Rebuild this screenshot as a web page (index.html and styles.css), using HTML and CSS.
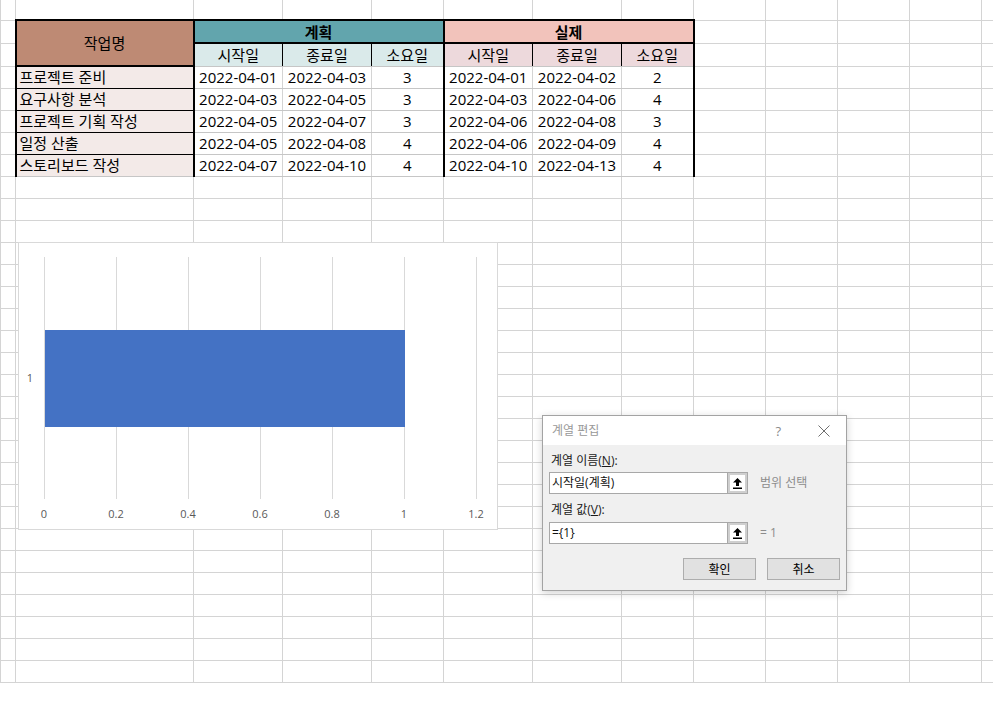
FILE: index.html
```html
<!DOCTYPE html>
<html lang="ko">
<head>
  <meta charset="UTF-8">
  <title>계열 편집</title>
  <link rel="stylesheet" href="styles.css">
</head>
<body>
  <table class="sheet">
    <colgroup>
      <col class="w-a"><col class="w-b"><col class="w-date"><col class="w-date"><col class="w-num">
      <col class="w-date"><col class="w-date"><col class="w-num">
      <col class="w-num"><col class="w-num"><col class="w-num"><col class="w-num"><col class="w-end">
    </colgroup>
    <tr class="r-top"><td></td><td></td><td></td><td></td><td></td><td></td><td></td><td></td><td></td><td></td><td></td><td></td><td></td></tr>
    <tr class="r-head">
      <td></td>
      <td class="name-head" rowspan="2">작업명</td>
      <td class="plan-head" colspan="3">계획</td>
      <td class="real-head" colspan="3">실제</td>
      <td></td><td></td><td></td><td></td><td></td>
    </tr>
    <tr class="r-head">
      <td></td>
      <td class="plan-sub split">시작일</td>
      <td class="plan-sub split">종료일</td>
      <td class="plan-sub edge">소요일</td>
      <td class="real-sub split">시작일</td>
      <td class="real-sub split">종료일</td>
      <td class="real-sub edge">소요일</td>
      <td></td><td></td><td></td><td></td><td></td>
    </tr>
    <tr>
      <td></td><td class="task">프로젝트 준비</td>
      <td class="val">2022-04-01</td><td class="val">2022-04-03</td><td class="val edge">3</td>
      <td class="val">2022-04-01</td><td class="val">2022-04-02</td><td class="val edge">2</td>
      <td></td><td></td><td></td><td></td><td></td>
    </tr>
    <tr>
      <td></td><td class="task">요구사항 분석</td>
      <td class="val">2022-04-03</td><td class="val">2022-04-05</td><td class="val edge">3</td>
      <td class="val">2022-04-03</td><td class="val">2022-04-06</td><td class="val edge">4</td>
      <td></td><td></td><td></td><td></td><td></td>
    </tr>
    <tr>
      <td></td><td class="task">프로젝트 기획 작성</td>
      <td class="val">2022-04-05</td><td class="val">2022-04-07</td><td class="val edge">3</td>
      <td class="val">2022-04-06</td><td class="val">2022-04-08</td><td class="val edge">3</td>
      <td></td><td></td><td></td><td></td><td></td>
    </tr>
    <tr>
      <td></td><td class="task">일정 산출</td>
      <td class="val">2022-04-05</td><td class="val">2022-04-08</td><td class="val edge">4</td>
      <td class="val">2022-04-06</td><td class="val">2022-04-09</td><td class="val edge">4</td>
      <td></td><td></td><td></td><td></td><td></td>
    </tr>
    <tr>
      <td></td><td class="task last">스토리보드 작성</td>
      <td class="val">2022-04-07</td><td class="val">2022-04-10</td><td class="val edge">4</td>
      <td class="val">2022-04-10</td><td class="val">2022-04-13</td><td class="val edge">4</td>
      <td></td><td></td><td></td><td></td><td></td>
    </tr>
    <tr><td></td><td></td><td></td><td></td><td></td><td></td><td></td><td></td><td></td><td></td><td></td><td></td><td></td></tr>
    <tr><td></td><td></td><td></td><td></td><td></td><td></td><td></td><td></td><td></td><td></td><td></td><td></td><td></td></tr>
    <tr><td></td><td></td><td></td><td></td><td></td><td></td><td></td><td></td><td></td><td></td><td></td><td></td><td></td></tr>
    <tr><td></td><td></td><td></td><td></td><td></td><td></td><td></td><td></td><td></td><td></td><td></td><td></td><td></td></tr>
    <tr><td></td><td></td><td></td><td></td><td></td><td></td><td></td><td></td><td></td><td></td><td></td><td></td><td></td></tr>
    <tr><td></td><td></td><td></td><td></td><td></td><td></td><td></td><td></td><td></td><td></td><td></td><td></td><td></td></tr>
    <tr><td></td><td></td><td></td><td></td><td></td><td></td><td></td><td></td><td></td><td></td><td></td><td></td><td></td></tr>
    <tr><td></td><td></td><td></td><td></td><td></td><td></td><td></td><td></td><td></td><td></td><td></td><td></td><td></td></tr>
    <tr><td></td><td></td><td></td><td></td><td></td><td></td><td></td><td></td><td></td><td></td><td></td><td></td><td></td></tr>
    <tr><td></td><td></td><td></td><td></td><td></td><td></td><td></td><td></td><td></td><td></td><td></td><td></td><td></td></tr>
    <tr><td></td><td></td><td></td><td></td><td></td><td></td><td></td><td></td><td></td><td></td><td></td><td></td><td></td></tr>
    <tr><td></td><td></td><td></td><td></td><td></td><td></td><td></td><td></td><td></td><td></td><td></td><td></td><td></td></tr>
    <tr><td></td><td></td><td></td><td></td><td></td><td></td><td></td><td></td><td></td><td></td><td></td><td></td><td></td></tr>
    <tr><td></td><td></td><td></td><td></td><td></td><td></td><td></td><td></td><td></td><td></td><td></td><td></td><td></td></tr>
    <tr><td></td><td></td><td></td><td></td><td></td><td></td><td></td><td></td><td></td><td></td><td></td><td></td><td></td></tr>
    <tr><td></td><td></td><td></td><td></td><td></td><td></td><td></td><td></td><td></td><td></td><td></td><td></td><td></td></tr>
    <tr><td></td><td></td><td></td><td></td><td></td><td></td><td></td><td></td><td></td><td></td><td></td><td></td><td></td></tr>
    <tr><td></td><td></td><td></td><td></td><td></td><td></td><td></td><td></td><td></td><td></td><td></td><td></td><td></td></tr>
    <tr><td></td><td></td><td></td><td></td><td></td><td></td><td></td><td></td><td></td><td></td><td></td><td></td><td></td></tr>
    <tr><td></td><td></td><td></td><td></td><td></td><td></td><td></td><td></td><td></td><td></td><td></td><td></td><td></td></tr>
    <tr><td></td><td></td><td></td><td></td><td></td><td></td><td></td><td></td><td></td><td></td><td></td><td></td><td></td></tr>
    <tr><td></td><td></td><td></td><td></td><td></td><td></td><td></td><td></td><td></td><td></td><td></td><td></td><td></td></tr>
    <tr><td></td><td></td><td></td><td></td><td></td><td></td><td></td><td></td><td></td><td></td><td></td><td></td><td></td></tr>
  </table>

  <!-- chart object sitting over the sheet -->
  <div class="chart">
    <svg width="478" height="286" viewBox="0 0 478 286">
      <g stroke="#d9d9d9" stroke-width="1">
        <line x1="25.5" y1="14" x2="25.5" y2="256"/>
        <line x1="97.5" y1="14" x2="97.5" y2="256"/>
        <line x1="169.5" y1="14" x2="169.5" y2="256"/>
        <line x1="241.5" y1="14" x2="241.5" y2="256"/>
        <line x1="313.5" y1="14" x2="313.5" y2="256"/>
        <line x1="385.5" y1="14" x2="385.5" y2="256"/>
        <line x1="457.5" y1="14" x2="457.5" y2="256"/>
      </g>
      <rect x="26" y="87" width="360" height="97" fill="#4472c4"/>
      <g class="axis-label" text-anchor="middle">
        <text x="25" y="275">0</text>
        <text x="97" y="275">0.2</text>
        <text x="169" y="275">0.4</text>
        <text x="241" y="275">0.6</text>
        <text x="313" y="275">0.8</text>
        <text x="385" y="275">1</text>
        <text x="457" y="275">1.2</text>
      </g>
      <text class="axis-label" x="11" y="139" text-anchor="middle">1</text>
    </svg>
  </div>

  <div class="dialog">
    <div class="dlg-title">
      <span class="dlg-caption">계열 편집</span>
      <span class="dlg-help">?</span>
      <svg class="dlg-close" width="12" height="12" viewBox="0 0 12 12">
        <path d="M0.5 0.5 L11.5 11.5 M11.5 0.5 L0.5 11.5" stroke="#6f6f6f" stroke-width="1" fill="none"/>
      </svg>
    </div>
    <div class="dlg-body">
      <div class="dlg-label">계열 이름(<u>N</u>):</div>
      <div class="dlg-row">
        <div class="ref-box">
          <span class="ref-text">시작일(계획)</span>
          <span class="ref-btn">
            <svg width="9" height="11" viewBox="0 0 9 11"><path d="M4.5 0 L9 4.5 H6 V8 H3 V4.5 H0 Z M0 9.5 H9 V11 H0 Z" fill="#000"/></svg>
          </span>
        </div>
        <span class="ref-hint">범위 선택</span>
      </div>
      <div class="dlg-label second">계열 값(<u>V</u>):</div>
      <div class="dlg-row">
        <div class="ref-box">
          <span class="ref-text">={1}</span>
          <span class="ref-btn">
            <svg width="9" height="11" viewBox="0 0 9 11"><path d="M4.5 0 L9 4.5 H6 V8 H3 V4.5 H0 Z M0 9.5 H9 V11 H0 Z" fill="#000"/></svg>
          </span>
        </div>
        <span class="ref-hint">= 1</span>
      </div>
      <div class="dlg-buttons">
        <button class="dlg-btn">확인</button>
        <button class="dlg-btn">취소</button>
      </div>
    </div>
  </div>
</body>
</html>
```

FILE: styles.css
```css
html {
  overflow: hidden;
}

body {
  margin: 0;
  width: 993px;
  height: 706px;
  overflow: hidden;
  position: relative;
  background: #fff;
  font-family: "Open Sans", "Noto Sans CJK KR", sans-serif;
  color: #000;
}

/* worksheet grid */
.sheet {
  border-collapse: collapse;
  table-layout: fixed;
  width: 993px;
  font-size: 15px;
  line-height: 18px;
}

.sheet td {
  border: 1px solid #d4d4d4;
  padding: 0;
  white-space: nowrap;
  overflow: hidden;
}

.sheet tr {
  height: 22px;
}

.sheet .r-top {
  height: 20px;
}

.sheet .r-top td {
  border-top: none;
}

.sheet .r-head {
  height: 23px;
}

.w-a { width: 15px; }
.w-b { width: 178px; }
.w-date { width: 89px; }
.w-num { width: 72px; }
.w-end { width: 12px; }

.name-head {
  background: #be8a74;
  text-align: center;
  border: 2px solid #000 !important;
}

.plan-head,
.real-head {
  font-weight: bold;
  text-align: center;
  border-top: 2px solid #000 !important;
  border-bottom: 2px solid #000 !important;
  border-right: 2px solid #000 !important;
}

.plan-head { background: #62a5ad; }
.real-head { background: #f2c3bb; }

.plan-sub,
.real-sub {
  text-align: center;
  border-bottom-color: #c6c6c6 !important;
}

.plan-sub { background: #daeaea; }
.real-sub { background: #edd9dc; }

.sheet td.split {
  border-right: 1px solid #000;
}

.sheet td.edge {
  border-right: 2px solid #000;
}

.sheet td.task {
  background: #f3eae8;
  padding-left: 3px;
  border-left: 2px solid #000;
  border-right: 2px solid #000;
  border-bottom: 1px solid #000;
}

.sheet td.task.last {
  border-bottom: 1px solid #c6c6c6;
}

.sheet td.val {
  text-align: center;
  border-top-color: #c6c6c6;
  border-bottom-color: #c6c6c6;
  border-left-color: #c6c6c6;
}

/* chart object */
.chart {
  position: absolute;
  left: 18px;
  top: 242px;
  width: 478px;
  height: 286px;
  background: #fff;
  border: 1px solid #d9d9d9;
}

.chart svg {
  display: block;
}

.axis-label {
  font-family: "Open Sans", sans-serif;
  font-size: 11px;
  fill: #595959;
}

/* series edit dialog */
.dialog {
  position: absolute;
  left: 542px;
  top: 415px;
  width: 303px;
  background: #f0f0f0;
  border: 1px solid #a3a3a3;
  box-shadow: 0 2px 8px rgba(0, 0, 0, 0.18);
  font-size: 12px;
  line-height: 16px;
}

.dlg-title {
  height: 29px;
  background: #fff;
  display: flex;
  align-items: center;
  padding: 0 9px;
}

.dlg-caption {
  color: #999;
  font-size: 12px;
  flex: 1;
}

.dlg-help {
  color: #8a8a8a;
  font-size: 13px;
  margin-right: 37px;
}

.dlg-close {
  margin-right: 7px;
}

.dlg-body {
  padding: 8px 6px 10px 6px;
}

.dlg-label {
  padding-left: 2px;
  color: #1a1a1a;
}

.dlg-label.second {
  margin-top: 8px;
}

.dlg-label u {
  text-decoration: underline;
}

.dlg-row {
  display: flex;
  align-items: center;
  margin-top: 3px;
}

.dlg-label.second + .dlg-row {
  margin-top: 4px;
}

.ref-box {
  width: 199px;
  height: 22px;
  box-sizing: border-box;
  border: 1px solid #a8a8a8;
  background: #fff;
  display: flex;
  align-items: stretch;
}

.ref-text {
  flex: 1;
  padding-left: 2px;
  line-height: 20px;
  color: #111;
}

.ref-btn {
  width: 20px;
  box-sizing: border-box;
  border-left: 1px solid #a8a8a8;
  box-shadow: inset 0 0 0 2px #cfcfcf;
  background: #fff;
  display: flex;
  align-items: center;
  justify-content: center;
}

.ref-btn svg {
  display: block;
}

.ref-hint {
  margin-left: 12px;
  color: #8c8c8c;
  font-size: 12px;
}

.dlg-buttons {
  display: flex;
  justify-content: flex-end;
  gap: 11px;
  margin-top: 14px;
}

.dlg-btn {
  width: 73px;
  height: 22px;
  padding: 0;
  background: #e1e1e1;
  border: 1px solid #adadad;
  font-family: "Open Sans", "Noto Sans CJK KR", sans-serif;
  font-size: 12px;
  color: #000;
}
```
